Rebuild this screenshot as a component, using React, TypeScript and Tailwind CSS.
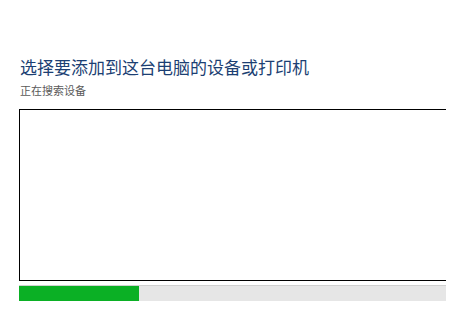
export default function App() {
  return (
    <div
      className="w-[475px] h-[315px] bg-white overflow-hidden"
      style={{ fontFamily: '"Microsoft YaHei", "Noto Sans CJK SC", sans-serif' }}
    >
      <div className="pl-[20px] pt-[55px]">
        <h1 className="text-[17px] leading-[24px] text-[#1c3f73] font-normal">
          选择要添加到这台电脑的设备或打印机
        </h1>
        <p className="mt-[4px] text-[11px] leading-[14px] text-[#5a5a5a]">正在搜索设备</p>
      </div>
      <div className="ml-[19px] mt-[12px] w-[427px]">
        {/* device list, cut off on the right */}
        <div className="h-[172px] border-t border-b border-l border-black bg-white" />
        <div className="mt-[4px] h-[16px] bg-[#e6e6e6] border-t border-[#d0d0d0]">
          <div className="h-full w-[120px] bg-[#0bb025]" />
        </div>
      </div>
    </div>
  );
}
